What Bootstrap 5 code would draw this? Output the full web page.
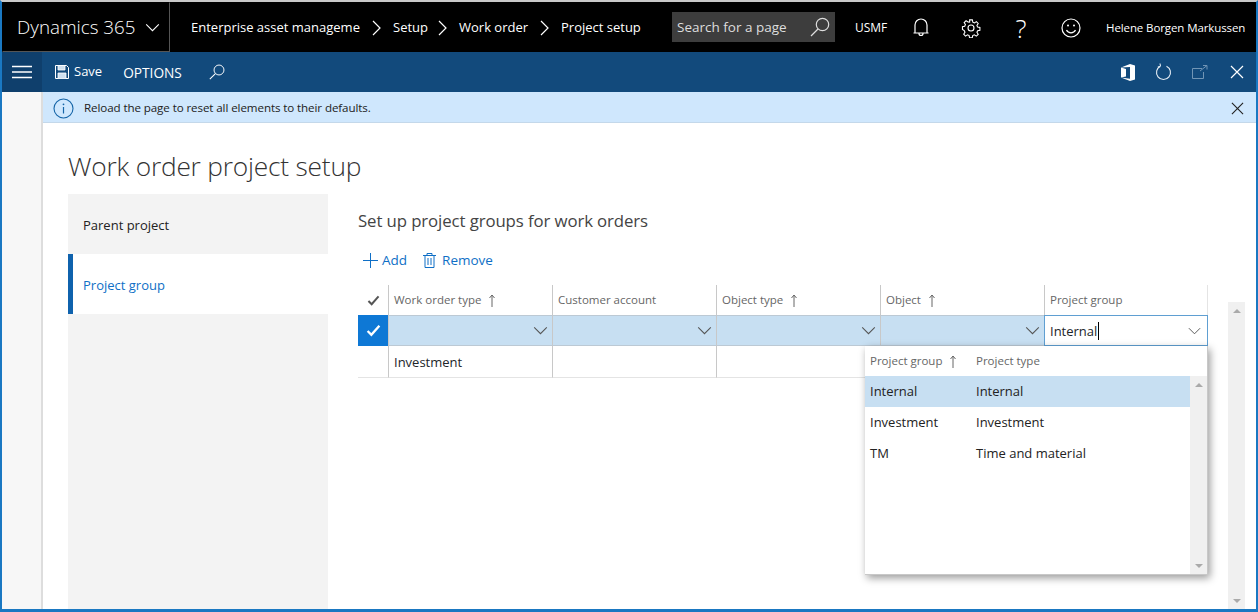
<!DOCTYPE html>
<html lang="en">
<head>
  <meta charset="UTF-8">
  <title>Work order project setup</title>
  <meta name="viewport" content="width=device-width, initial-scale=1">
  <link href="https://cdn.jsdelivr.net/npm/bootstrap@5.3.3/dist/css/bootstrap.min.css" rel="stylesheet">
  <style>
    html, body { height: 100%; overflow: hidden; }
    body {
      font-family: "Open Sans", "Noto Sans", sans-serif;
      font-size: 13px;
      color: #222;
      background: #fff;
      border-style: solid;
      border-color: #c9c9c9 #1a78c2 #1a78c2 #1a78c2;
      border-width: 2px 2px 3px 2px;
    }
    svg { display: block; flex: none; }
    .topbar { height: 50px; background: #000; color: #fff; flex: none; }
    .brand-box { width: 168px; height: 50px; border: 1px solid #555; border-top-color: #000; border-left-color: #000; font-size: 18.8px; font-weight: 300; padding-left: 14px; gap: 10px; white-space: nowrap; }
    .crumbs { margin-left: 21px; width: 481px; padding-top: 1px; }
    .crumb-item { white-space: nowrap; flex: none; }
    .crumb-sep { margin: 0 12px; }
    .search-box { width: 163px; height: 30px; background: #3d3d3d; color: #ddd; font-size: 13.5px; padding: 0 5px; margin-right: 20px; }
    .top-tools { font-size: 12px; padding-top: 1px; }
    .help-mark { font-size: 26px; font-weight: 300; width: 20px; line-height: 1; margin-right: 30px; }
    .cmdbar { height: 40px; background: #124a7c; color: #fff; flex: none; }
    .menu-btn { width: 40px; height: 40px; background: #0f3f6c; }
    .cmd-save { font-size: 13px; margin-left: 5px; padding-bottom: 1px; }
    .cmd-opts { font-size: 13.7px; margin-left: 21px; padding-top: 2px; }
    .win-tools { padding-right: 12px; }
    .rail { width: 41px; background: #f7f7f7; border-right: 2px solid #ddd; flex: none; }
    .msgbar { height: 31px; background: #cfe7fd; border-bottom: 1px solid #c4d8ea; font-size: 11.6px; padding: 2px 12px 0 10px; letter-spacing: -.1px; flex: none; }
    .page-title { font-size: 26.3px; font-weight: 300; margin: 27px 0 0 25px; line-height: 32px; color: #333; letter-spacing: -.2px; }
    .content-row { margin: 12px 0 0 25px; min-height: 0; }
    .side-tabs { width: 260px; background: #f3f3f3; flex: none; }
    .side-tabs .nav-link { height: 60px; line-height: 62px; padding: 0 0 0 15px; color: #222; font-size: 13px; }
    .side-tabs .nav-link.active { background: #fff; color: #0f6fc6; border-left: 5px solid #0f62ad; padding-left: 10px; }
    .main-area { margin-left: 30px; min-width: 0; }
    .section-title { font-size: 16.8px; font-weight: 400; color: #444; margin: 16px 0 0; line-height: 22px; letter-spacing: -.1px; }
    .grid-actions { margin: 17px 0 0 5px; gap: 16px; color: #0f6fc6; font-size: 13.5px; height: 22px; }
    .grid-wrap { width: 850px; margin-top: 14px; position: relative; }
    .scroll-track { width: 17px; background: #f0f0f0; flex: none; }
    .main-scroll { margin: 31px 0 0 20px; }
    table.wo-grid { table-layout: fixed; width: 850px; margin: 0; --bs-table-bg: transparent; border-collapse: separate; border-spacing: 0; }
    .wo-grid th, .wo-grid td { padding: 0; vertical-align: middle; border: 0; border-left: 1px solid #c8c8c8; height: 31px; }
    .wo-grid th { font-weight: 400; color: #666; font-size: 11.5px; height: 30px; padding-left: 5px; }
    .wo-grid th:first-child, .wo-grid td:first-child { border-left: 0; padding: 0; }
    .wo-grid th:last-child { border-right: 1px solid #e4e4e4; }
    .sort-label { gap: 7px; }
    .wo-grid .row-sel td { background: #c7dff2; border-top: 1px solid #bcc9d4; border-bottom: 1px solid #bcc9d4; }
    .wo-grid .row-sel .sel-mark { background: #0e78d5; border-color: #0e78d5; }
    .wo-grid .row-sel .field-on { background: #fff; border: 1px solid #5f9fd2; }
    .wo-grid .row-plain td { height: 32px; padding-left: 5px; padding-top: 2px; border-bottom: 1px solid #e4e4e4; }
    .cell-flex { padding: 0 4px 0 5px; height: 29px; }
    .text-caret { border-right: 1px solid #000; padding: 1px 1px 0 0; line-height: 17px; }
    .lookup { position: absolute; left: 507px; top: 61px; width: 343px; height: 229px; background: #fff; box-shadow: 2px 3px 8px rgba(0,0,0,.4); border-right: 1px solid #c8c8c8; border-bottom: 1px solid #c8c8c8; }
    .lookup-col1 { width: 111px; padding-left: 5px; flex: none; }
    .lookup-head { height: 30px; color: #666; font-size: 11.5px; }
    .lookup-row { height: 31px; padding-top: 1px; }
    .lookup-row.picked { background: #c7dff2; }
    .arrow-up { width: 0; height: 0; border-left: 4px solid transparent; border-right: 4px solid transparent; border-bottom: 4px solid #aaa; }
    .arrow-down { width: 0; height: 0; border-left: 4px solid transparent; border-right: 4px solid transparent; border-top: 4px solid #aaa; }
    .scroll-pad { padding: 7px 0 6px; }
  </style>
</head>
<body class="d-flex flex-column">

<svg width="0" height="0" class="position-absolute">
  <symbol id="chev" viewBox="0 0 16 10"><path d="M1 1.500l7 7 7-7" fill="none" stroke="currentColor" stroke-width="1.200"/></symbol>
  <symbol id="crumbsep" viewBox="0 0 9 16"><path d="M1 1l7 7-7 7" fill="none" stroke="currentColor" stroke-width="1.200"/></symbol>
  <symbol id="lens" viewBox="0 0 20 20"><circle cx="12.500" cy="7.500" r="6.200" fill="none" stroke="currentColor" stroke-width="1.200"/><path d="M8 12L1 19" stroke="currentColor" stroke-width="1.300"/></symbol>
  <symbol id="cross" viewBox="0 0 14 14"><path d="M1 1l12 12M13 1L1 13" stroke="currentColor" stroke-width="1.200"/></symbol>
  <symbol id="uparrow" viewBox="0 0 8 13"><path d="M4 13V1M1.500 4L4 1l2.500 3" fill="none" stroke="currentColor" stroke-width="1"/></symbol>
  <symbol id="tick" viewBox="0 0 14 12"><path d="M1.500 6.500l3.500 3.500 7.500-8.500" fill="none" stroke="currentColor" stroke-width="2.200"/></symbol>
</svg>

<!-- Top bar -->
<header class="topbar d-flex align-items-center">
  <div class="brand-box d-flex align-items-center">
    <span>Dynamics 365</span>
    <svg width="15" height="9" class="text-white"><use href="#chev"/></svg>
  </div>
  <div class="crumbs d-flex align-items-center">
    <span class="crumb-item" style="width:169px">Enterprise asset manageme</span>
    <svg width="9" height="16" class="crumb-sep"><use href="#crumbsep"/></svg>
    <span class="crumb-item" style="width:33px">Setup</span>
    <svg width="9" height="16" class="crumb-sep"><use href="#crumbsep"/></svg>
    <span class="crumb-item" style="width:69px">Work order</span>
    <svg width="9" height="16" class="crumb-sep"><use href="#crumbsep"/></svg>
    <span class="crumb-item">Project setup</span>
  </div>
  <div class="search-box d-flex align-items-center justify-content-between">
    <span>Search for a page</span>
    <svg width="20" height="20"><use href="#lens"/></svg>
  </div>
  <div class="top-tools d-flex align-items-center">
    <span style="width:57px">USMF</span>
    <svg width="18" height="20" viewBox="0 0 18 20" style="margin-right:31px"><path d="M3 15V7a6 6 0 0 1 12 0v8zM1.500 15h15M7 15.500a2 2 0 0 0 4 0" fill="none" stroke="#fff" stroke-width="1.200"/></svg>
    <svg width="20" height="20" viewBox="0 0 20 20" style="margin-right:30px"><circle cx="10" cy="10" r="3" fill="none" stroke="#fff" stroke-width="1.100"/><path d="M8.500 1h3l.5 2.500 1.800.8 2.200-1.400 2 2.100-1.400 2.200.8 1.800 2.500.5v3l-2.500.5-.8 1.800 1.400 2.200-2.100 2-2.200-1.400-1.800.8-.5 2.500h-3l-.5-2.500-1.800-.8-2.200 1.400-2-2.100 1.400-2.200-.8-1.800L.5 11.500v-3L3 8l.8-1.800-1.400-2.200 2.100-2 2.200 1.400L8.500 3.500z" transform="translate(1 1) scale(.9)" fill="none" stroke="#fff" stroke-width="1.200"/></svg>
    <span class="help-mark text-center">?</span>
    <svg width="20" height="20" viewBox="0 0 20 20" style="margin-right:25px"><circle cx="10" cy="10" r="9" fill="none" stroke="#fff" stroke-width="1.200"/><circle cx="7" cy="7.500" r="1" fill="#fff"/><circle cx="13" cy="7.500" r="1" fill="#fff"/><path d="M5.500 12a5 5 0 0 0 9 0" fill="none" stroke="#fff" stroke-width="1.200"/></svg>
    <span class="text-nowrap" style="font-size:11.5px;letter-spacing:-.1px">Helene Borgen Markussen</span>
  </div>
</header>

<!-- Command bar -->
<div class="cmdbar d-flex align-items-center">
  <div class="menu-btn d-flex align-items-center justify-content-center">
    <svg width="20" height="14" viewBox="0 0 20 14"><path d="M0 1.500h20M0 7h20M0 12.500h20" stroke="#fff" stroke-width="1.400"/></svg>
  </div>
  <svg width="14" height="14" viewBox="0 0 14 14" style="margin-left:13px"><path d="M.5.500h11l2 2v11H.5z" fill="none" stroke="#fff"/><path d="M3 .5h7v4.500H3zM3 13.500V8h8v5.500" fill="#cfe0ef" stroke="#fff" stroke-width=".8"/></svg>
  <span class="cmd-save">Save</span>
  <span class="cmd-opts">OPTIONS</span>
  <svg width="16" height="16" style="margin-left:27px"><use href="#lens"/></svg>
  <div class="win-tools d-flex align-items-center ms-auto">
    <svg width="14" height="17" viewBox="0 0 14 17"><path d="M0 3.500L9 0l5 1.500v14L9 17 0 13.500l9 1.300V3z" fill="#fff"/><path d="M0 3.500L5 5v7.500l-5 1z" fill="#fff"/></svg>
    <svg width="17" height="18" viewBox="0 0 17 18" style="margin-left:20px"><path d="M11.500 3.200a7 7 0 1 1-6 0M5.500 3.200L5 .5M5.500 3.200L2.800 4" fill="none" stroke="#e6eef5" stroke-width="1.100"/></svg>
    <svg width="16" height="14" viewBox="0 0 16 14" style="margin-left:20px;opacity:.5"><path d="M10 3.500H.5v10h11V7M8 6l7-5.500M11 .5h4v4" fill="none" stroke="#cfe0ef"/></svg>
    <svg width="14" height="14" class="text-white" style="margin-left:22px"><use href="#cross"/></svg>
  </div>
</div>

<div class="d-flex flex-grow-1" style="min-height:0">
  <div class="rail"></div>
  <div class="flex-grow-1 d-flex flex-column" style="min-width:0">

    <!-- Message bar -->
    <div class="msgbar d-flex align-items-center">
      <svg width="21" height="21" viewBox="0 0 21 21" class="me-2"><circle cx="10.500" cy="10.500" r="9.500" fill="none" stroke="#1565a8" stroke-width="1.100"/><path d="M10.500 9v6.500" stroke="#1565a8" stroke-width="1.200"/><circle cx="10.500" cy="6.300" r=".9" fill="#1565a8"/></svg>
      <span style="margin-left:2px">Reload the page to reset all elements to their defaults.</span>
      <svg width="13" height="13" class="ms-auto"><use href="#cross"/></svg>
    </div>

    <h1 class="page-title">Work order project setup</h1>

    <div class="content-row d-flex flex-grow-1">
      <nav class="side-tabs nav flex-column flex-nowrap">
        <a class="nav-link" href="#">Parent project</a>
        <a class="nav-link active" href="#">Project group</a>
      </nav>

      <div class="main-area flex-grow-1 d-flex flex-column">
        <h2 class="section-title">Set up project groups for work orders</h2>
        <div class="grid-actions d-flex align-items-center">
          <span class="d-flex align-items-center gap-1">
            <svg width="15" height="15" viewBox="0 0 15 15"><path d="M7.500 0v15M0 7.500h15" stroke="#0f6fc6"/></svg>Add
          </span>
          <span class="d-flex align-items-center" style="gap:6px">
            <svg width="13" height="15" viewBox="0 0 13 15"><path d="M0 2.500h13M4 2.500V.5h5v2M2 2.500v12h9v-12M5 5v7M8 5v7" fill="none" stroke="#0f6fc6"/></svg>Remove
          </span>
        </div>

        <div class="d-flex flex-grow-1" style="min-height:0">
          <div class="grid-wrap">
            <table class="table wo-grid">
              <colgroup><col style="width:30px"><col style="width:164px"><col style="width:164px"><col style="width:164px"><col style="width:164px"><col style="width:164px"></colgroup>
              <thead>
                <tr>
                  <th><svg width="13" height="11" class="mx-auto" style="color:#555"><use href="#tick"/></svg></th>
                  <th><span class="sort-label d-flex align-items-center">Work order type <svg width="8" height="13"><use href="#uparrow"/></svg></span></th>
                  <th>Customer account</th>
                  <th><span class="sort-label d-flex align-items-center">Object type <svg width="8" height="13"><use href="#uparrow"/></svg></span></th>
                  <th><span class="sort-label d-flex align-items-center">Object <svg width="8" height="13"><use href="#uparrow"/></svg></span></th>
                  <th>Project group</th>
                </tr>
              </thead>
              <tbody>
                <tr class="row-sel">
                  <td class="sel-mark"><svg width="15" height="13" class="mx-auto text-white"><use href="#tick"/></svg></td>
                  <td><div class="cell-flex d-flex align-items-center justify-content-end"><svg width="15" height="9" style="color:#555"><use href="#chev"/></svg></div></td>
                  <td><div class="cell-flex d-flex align-items-center justify-content-end"><svg width="15" height="9" style="color:#555"><use href="#chev"/></svg></div></td>
                  <td><div class="cell-flex d-flex align-items-center justify-content-end"><svg width="15" height="9" style="color:#555"><use href="#chev"/></svg></div></td>
                  <td><div class="cell-flex d-flex align-items-center justify-content-end"><svg width="15" height="9" style="color:#555"><use href="#chev"/></svg></div></td>
                  <td class="field-on"><div class="cell-flex d-flex align-items-center justify-content-between"><span class="text-caret">Internal</span><svg width="13" height="8" style="color:#555;margin-right:2px"><use href="#chev"/></svg></div></td>
                </tr>
                <tr class="row-plain">
                  <td></td>
                  <td>Investment</td>
                  <td></td>
                  <td></td>
                  <td></td>
                  <td></td>
                </tr>
              </tbody>
            </table>

            <!-- Lookup dropdown -->
            <div class="lookup d-flex flex-column">
              <div class="lookup-head d-flex align-items-center">
                <span class="lookup-col1 d-flex align-items-center sort-label">Project group <svg width="8" height="13"><use href="#uparrow"/></svg></span>
                <span>Project type</span>
              </div>
              <div class="d-flex flex-grow-1">
                <div class="flex-grow-1">
                  <div class="lookup-row picked d-flex align-items-center"><span class="lookup-col1">Internal</span><span>Internal</span></div>
                  <div class="lookup-row d-flex align-items-center"><span class="lookup-col1">Investment</span><span>Investment</span></div>
                  <div class="lookup-row d-flex align-items-center"><span class="lookup-col1">TM</span><span>Time and material</span></div>
                </div>
                <div class="scroll-track scroll-pad d-flex flex-column justify-content-between align-items-center">
                  <span class="arrow-up"></span>
                  <span class="arrow-down"></span>
                </div>
              </div>
            </div>
          </div>

          <div class="scroll-track main-scroll scroll-pad d-flex flex-column justify-content-between align-items-center">
            <span class="arrow-up"></span>
            <span class="arrow-down"></span>
          </div>
        </div>
      </div>
    </div>
  </div>
</div>

<script src="https://cdn.jsdelivr.net/npm/bootstrap@5.3.3/dist/js/bootstrap.bundle.min.js"></script>
</body>
</html>
